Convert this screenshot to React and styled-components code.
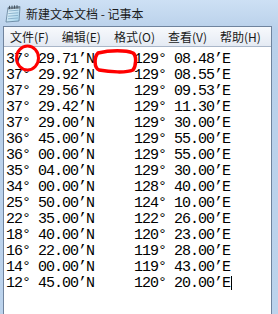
import React from "react";
import styled, { createGlobalStyle } from "styled-components";

const GlobalStyle = createGlobalStyle`
  html, body {
    margin: 0;
    padding: 0;
    width: 278px;
    height: 314px;
    overflow: hidden;
    background: #bcd3ec;
  }
`;

const Window = styled.div`
  position: relative;
  width: 278px;
  height: 314px;
  display: flex;
  flex-direction: column;
  background: linear-gradient(#cde0f4, #b9d0ea 30px, #bcd3ec);
  font-family: "Noto Sans CJK SC", "Noto Sans", sans-serif;
`;

const TitleBar = styled.div`
  height: 26px;
  display: flex;
  align-items: center;
  gap: 4px;
  padding-left: 4px;
  font-size: 12px;
  color: #1b1b1b;
`;

const Client = styled.div`
  flex: 1;
  margin: 0 6px 0 3px;
  display: flex;
  flex-direction: column;
  border: 1px solid #6f839d;
  border-bottom: none;
  background: #fff;
`;

const MenuBar = styled.div`
  height: 19px;
  display: flex;
  align-items: center;
  background: linear-gradient(#f7f9fc, #eef2f8 50%, #e4eaf3);
  border-bottom: 1px solid #a9b6c8;
  font-size: 12px;
  color: #1a1a1a;
`;

const MenuItem = styled.span`
  padding: 0 7px 0 6px;
  white-space: nowrap;
  line-height: 19px;
`;

const Editor = styled.div`
  flex: 1;
  padding: 5px 0 0 2px;
  font-family: "Liberation Mono", "DejaVu Sans Mono", monospace;
  font-size: 15px;
  letter-spacing: -1px;
  color: #000;
`;

const Line = styled.div`
  display: grid;
  grid-template-columns: 128px auto;
  height: 16px;
  line-height: 16px;
  white-space: pre;
`;

const Caret = styled.span`
  display: inline-block;
  width: 1px;
  height: 14px;
  margin-left: 1px;
  background: #000;
  vertical-align: -3px;
`;

const Marks = styled.svg`
  position: absolute;
  left: 0;
  top: 0;
  pointer-events: none;
`;

const rows = [
  ["37° 29.71’N", "129° 08.48’E"],
  ["37° 29.92’N", "129° 08.55’E"],
  ["37° 29.56’N", "129° 09.53’E"],
  ["37° 29.42’N", "129° 11.30’E"],
  ["37° 29.00’N", "129° 30.00’E"],
  ["36° 45.00’N", "129° 55.00’E"],
  ["36° 00.00’N", "129° 55.00’E"],
  ["35° 04.00’N", "129° 30.00’E"],
  ["34° 00.00’N", "128° 40.00’E"],
  ["25° 50.00’N", "124° 10.00’E"],
  ["22° 35.00’N", "122° 26.00’E"],
  ["18° 40.00’N", "120° 23.00’E"],
  ["16° 22.00’N", "119° 28.00’E"],
  ["14° 00.00’N", "119° 43.00’E"],
  ["12° 45.00’N", "120° 20.00’E"],
];

const menus = ["文件(F)", "编辑(E)", "格式(O)", "查看(V)", "帮助(H)"];

const NotepadIcon = () => (
  <svg width="18" height="19" viewBox="0 0 18 19">
    <defs>
      <linearGradient id="pg" x1="0" y1="0" x2="1" y2="1">
        <stop offset="0" stopColor="#f4fbff" />
        <stop offset="1" stopColor="#9fd0ea" />
      </linearGradient>
    </defs>
    <path d="M4 3.5 L16 2.5 L15 17 L2 18 Z" fill="url(#pg)" stroke="#5f7f98" strokeWidth="0.8" />
    <path d="M4.5 7 L14.5 6.2 M4.3 9.6 L14.3 8.8 M4.1 12.2 L14.1 11.4 M3.9 14.8 L13.9 14" stroke="#7fa8c4" strokeWidth="0.8" />
    <path d="M4 3.5 L16 2.5 L16 4.6 L4 5.6 Z" fill="#7b8a98" />
    <path d="M5.5 1.8 v3.2 M8 1.6 v3.2 M10.5 1.4 v3.2 M13 1.2 v3.2" stroke="#3d4955" strokeWidth="0.9" />
  </svg>
);

export default function App() {
  return (
    <>
      <GlobalStyle />
      <Window>
        <TitleBar>
          <NotepadIcon />
          <span>新建文本文档 - 记事本</span>
        </TitleBar>
        <Client>
          <MenuBar>
            {menus.map((m) => (
              <MenuItem key={m}>{m}</MenuItem>
            ))}
          </MenuBar>
          <Editor>
            {rows.map(([lat, lon], i) => (
              <Line key={i}>
                <span>{lat}</span>
                <span>
                  {lon}
                  {i === rows.length - 1 && <Caret />}
                </span>
              </Line>
            ))}
          </Editor>
        </Client>
        <Marks width="278" height="314">
          <ellipse cx="27.5" cy="58" rx="11" ry="12" fill="none" stroke="#f00" strokeWidth="3" />
          <path
            d="M98 53 C110 50 126 50 133 53 C137 56 136 66 133 70 C126 73 110 72 99 70 C94 68 94 57 98 53 Z"
            fill="none"
            stroke="#f00"
            strokeWidth="3.5"
          />
        </Marks>
      </Window>
    </>
  );
}
